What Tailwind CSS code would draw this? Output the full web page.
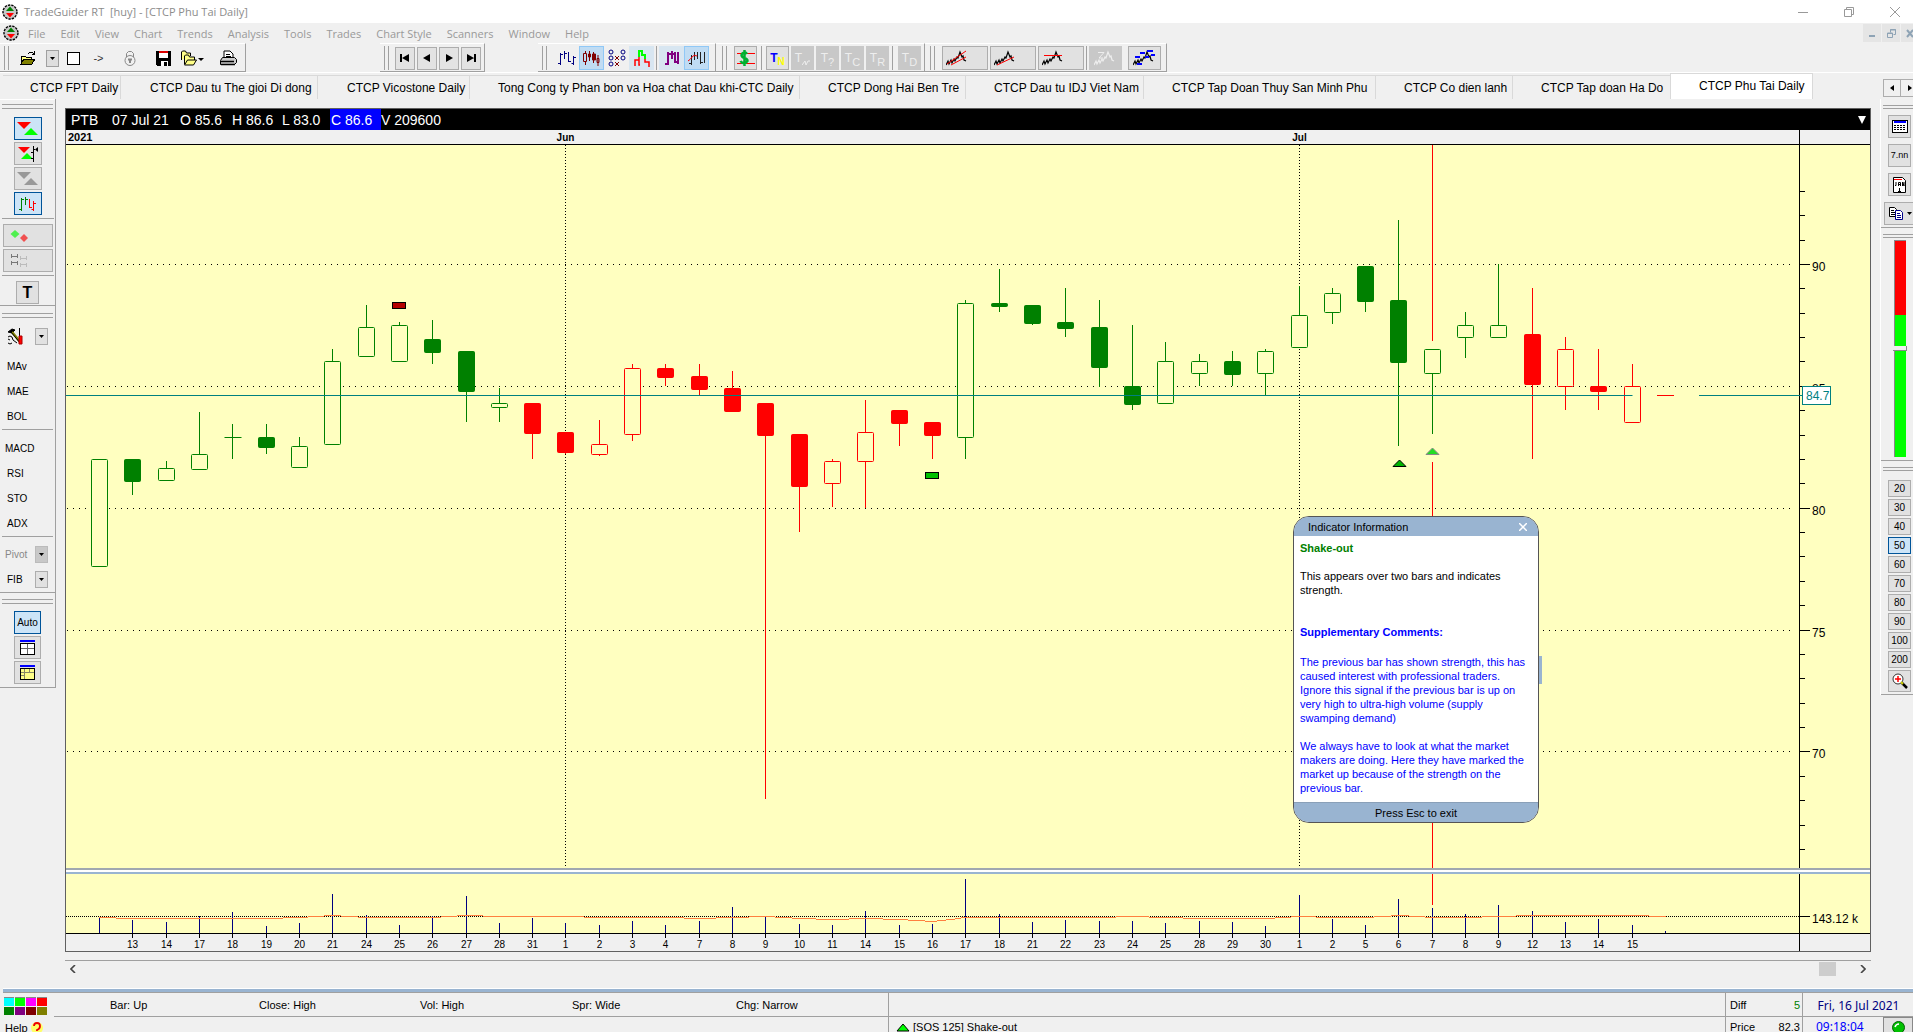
<!DOCTYPE html>
<html lang="en">
<head>
    <meta charset="UTF-8">
    <meta name="viewport" content="width=device-width, initial-scale=1.0">
    <title>TradeGuider RT [huy] - [CTCP Phu Tai Daily]</title>
    <script src="https://cdn.jsdelivr.net/npm/@tailwindcss/browser@4"></script>
</head>
<body class="h-screen flex flex-col overflow-hidden bg-[#f0f0f0] text-black text-[12px] leading-none font-['Liberation_Sans',Arial,sans-serif]">

    <!-- Shared icons -->
    <svg class="hidden">
        <symbol id="logo" viewBox="0 0 16 16">
            <circle cx="8" cy="8" r="7" fill="#c8c8c8" stroke="#000" stroke-width="1.4" stroke-dasharray="2.4 1"/>
            <path d="M8 2.5L12 7H4z" fill="#008000"/><path d="M8 13.5L4 9h8z" fill="#f00"/>
        </symbol>
        <symbol id="down" viewBox="0 0 5 3"><path d="M0 0h5L2.5 3z"/></symbol>
        <symbol id="zig" viewBox="0 0 24 16">
            <path d="M0 15l2-4 1 3 2-4 1 3 2-4 1 2 2-4 1 1 2-6 2 5 1-1 1 4 2 1" fill="none" stroke="currentColor" stroke-width="1.200"/>
        </symbol>
        <symbol id="bars" viewBox="0 0 18 16">
            <path d="M2.500 3v12M0 13.500h2M3 4.500h2M6.500 1v8M7 3.500h2M10.500 2v10M11 11.500h2M15.500 6v9M13.500 13.500h2M16 7.500h2" fill="none" stroke="currentColor"/>
        </symbol>
    </svg>

    <!-- Title bar -->
    <header class="h-[23px] shrink-0 bg-white flex items-center justify-between pl-[2px] pr-[13px] text-[#8c8c8c] font-['Open_Sans',sans-serif]">
        <h1 class="flex items-center gap-[6px] text-[11px] whitespace-pre"><svg class="size-4"><use href="#logo"/></svg>TradeGuider RT  [huy] - [CTCP Phu Tai Daily]</h1>
        <div class="flex items-center gap-[36px]">
            <button aria-label="Minimize"><svg class="w-[10px] h-[10px]" stroke="#999" fill="none"><path d="M0 5.500h10"/></svg></button>
            <button aria-label="Restore"><svg class="w-[10px] h-[10px]" stroke="#999" fill="none"><path d="M.5 2.500h7v7h-7zM2.500 2.500v-2h7v7h-2"/></svg></button>
            <button aria-label="Close"><svg class="w-[10px] h-[10px]" stroke="#999" fill="none"><path d="M0 0l10 10M10 0L0 10"/></svg></button>
        </div>
    </header>

    <!-- Menu -->
    <div class="h-5 shrink-0 flex items-center justify-between pl-[3px] overflow-hidden text-[#999] font-['Open_Sans',sans-serif]">
        <nav class="flex items-center gap-[15px] text-[11px]">
            <svg class="size-4 -mr-[6px]"><use href="#logo"/></svg>
            <a href="#">File</a><a href="#">Edit</a><a href="#">View</a><a href="#">Chart</a><a href="#">Trends</a><a href="#">Analysis</a><a href="#">Tools</a><a href="#">Trades</a><a href="#">Chart Style</a><a href="#">Scanners</a><a href="#">Window</a><a href="#">Help</a>
        </nav>
        <div class="flex gap-px -mr-[6px]">
            <button aria-label="Minimize chart" class="w-[18px] h-[18px] bg-[#e5e5e5] grid place-items-center"><svg class="size-[9px]"><path d="M1 6h6v2h-6z" fill="#8ea3b5"/></svg></button>
            <button aria-label="Restore chart" class="w-[18px] h-[18px] bg-[#e5e5e5] grid place-items-center"><svg class="size-[9px]" fill="none" stroke="#8ea3b5"><path d="M.5 4h5v4.500h-5zM0 4.500h6M3.500 3.500v-3h5v5h-2M3 1h6"/></svg></button>
            <button aria-label="Close chart" class="w-[18px] h-[18px] bg-[#e5e5e5] grid place-items-center"><svg class="size-[9px]" stroke="#8ea3b5" stroke-width="2"><path d="M1 1l6 7M7 1L1 8"/></svg></button>
        </div>
    </div>

    <!-- Toolbars -->
    <div class="h-[30px] shrink-0 flex items-start border-b border-white">
        <div class="w-[246px] h-[29px] mr-[134px] flex items-center pt-px border-r border-b border-[#a0a0a0] border-t border-t-white">
            <div class="w-[5px] h-6 ml-[4px] mr-[11px] border-x border-[#a0a0a0]"></div>
            <button aria-label="Open"><svg class="w-4 h-4" shape-rendering="crispEdges"><path d="M1 14V6h4l1 1h5v3" fill="#ffff80" stroke="#000"/><path d="M1 14l3-5h11l-3 5z" fill="#808000" stroke="#000"/><path d="M8 3.500q3-3 6 0M14.500 1v3h-3" fill="none" stroke="#000"/></svg></button>
            <button aria-label="Open list" class="w-[13px] h-[17px] ml-[10px] bg-[#dedede] border border-[#a0a0a0] grid place-items-center"><svg class="w-[5px] h-[3px]"><use href="#down"/></svg></button>
            <input type="checkbox" aria-label="Link" class="appearance-none size-[13px] ml-[8px] bg-white border border-black">
            <button class="w-[13px] ml-[12px] text-[11px] text-[#333]">-&gt;</button>
            <button aria-label="Lock" class="ml-[18px]"><svg class="w-[14px] h-4" fill="none" stroke="#888"><path d="M3.500 7V3.500l2-2h3l2 2V7"/><circle cx="7" cy="10.500" r="5"/><path d="M5 9.500h4M7 9v4" stroke-width="2"/></svg></button>
            <button aria-label="Save" class="ml-[19px]"><svg class="w-[15px] h-[15px]" shape-rendering="crispEdges"><path d="M0 0h15v15h-14l-1-1z"/><path d="M3 0h9v7h-9zM5 10h7v5h-7z" fill="#fff"/><path d="M3 0h9v2h-9z" fill="#d00"/><path d="M8 11h3v4h-3z" fill="#000"/></svg></button>
            <button aria-label="Folders" class="ml-[9px]"><svg class="w-6 h-[17px]"><path d="M1.500 10V2l1-1h3l1 2h4v3" fill="#ff8" stroke="#000"/><path d="M4.500 14V6l1-1h3l1 2h5v3" fill="#ff8" stroke="#000"/><path d="M4.500 15l3-5h9l-3 5z" fill="#ff8" stroke="#000"/><path d="M18 8h6l-3 3z"/></svg></button>
            <button aria-label="Print" class="ml-[16px]"><svg class="w-[17px] h-4"><path d="M4 8V1h6l3 3v4" fill="#fff" stroke="#000"/><path d="M6 4.500h4M6 6.500h5" stroke="#000"/><path d="M.5 10.500l2-3h12l2 2v3l-2 2h-14z" fill="#ccc" stroke="#000"/><path d="M1 11.500h13M1 14.500h14" stroke="#000" stroke-width="1.500"/></svg></button>
        </div>

        <div class="w-[105px] h-[29px] mr-[53px] flex items-center gap-[2px] pt-px border-r border-b border-t border-[#a0a0a0] border-t-white">
            <div class="w-[5px] h-6 ml-[4px] mr-[4px] border-x border-[#a0a0a0]"></div>
            <button aria-label="First" class="w-5 h-[23px] bg-[#e3e3e3] border border-[#adadad] grid place-items-center"><svg class="w-[10px] h-2"><path d="M0 0h2v8h-2zM2 4l7-4v8z"/></svg></button>
            <button aria-label="Previous" class="w-5 h-[23px] bg-[#e3e3e3] border border-[#adadad] grid place-items-center"><svg class="w-2 h-2"><path d="M0 4l7-4v8z"/></svg></button>
            <button aria-label="Next" class="w-5 h-[23px] bg-[#e3e3e3] border border-[#adadad] grid place-items-center"><svg class="w-2 h-2"><path d="M8 4L1 0v8z"/></svg></button>
            <button aria-label="Last" class="w-5 h-[23px] bg-[#e3e3e3] border border-[#adadad] grid place-items-center"><svg class="w-[10px] h-2"><path d="M8 0h2v8h-2zM8 4L1 0v8z"/></svg></button>
        </div>

        <div class="w-[178px] h-[29px] flex items-center pt-px border-r border-b border-t border-[#a0a0a0] border-t-white">
            <div class="w-[5px] h-6 ml-[4px] mr-[7px] border-x border-[#a0a0a0]"></div>
            <button aria-label="Bar chart" class="w-[25px] h-[24px] grid place-items-center text-[#000080]"><svg class="w-[18px] h-4"><use href="#bars"/></svg></button>
            <button aria-label="Candles" class="w-[25px] h-[24px] bg-[#c0dcf3] border border-[#90c8f6] grid place-items-center"><svg class="w-[17px] h-4" fill="none" stroke="#800000"><path d="M2.500 1v2M2.500 12v3M.5 3.500h3v8h-3z"/><path d="M6.500 1v10M10.500 2v11M15 5v11"/><path d="M5.500 4h2v3h-2zM9.500 4h3v6h-3z" fill="#800000"/><path d="M14 8.500h2v4h-2z"/></svg></button>
            <button aria-label="Point and figure" class="w-[25px] h-[24px] grid place-items-center"><svg class="w-[18px] h-[18px]" fill="none" stroke="#000080"><circle cx="3" cy="3" r="2"/><circle cx="3" cy="9" r="2"/><circle cx="3" cy="15" r="2"/><circle cx="15" cy="3" r="2"/><circle cx="15" cy="9" r="2"/><path d="M7 7l4 4M11 7l-4 4M7 13l4 4M11 13l-4 4" stroke="#800000"/></svg></button>
            <button aria-label="Kagi" class="w-[25px] h-[24px] bg-[#d8e6f1] grid place-items-center"><svg class="w-4 h-[17px]" fill="none" stroke-width="2"><path d="M5 7V1h3v4h3v4" stroke="#0f0"/><path d="M1 16v-6h4v5h1M5 10V7M11 9v3h4v5" stroke="#f00" stroke-width="1.500"/></svg></button>
            <div class="w-px h-6 mx-[2px] bg-[#a0a0a0]"></div>
            <button aria-label="Thick bars" class="w-[25px] h-[24px] bg-[#d8e6f1] grid place-items-center"><svg class="w-[14px] h-4" fill="none" stroke="#800080" stroke-width="2"><path d="M0 14h2M3 2v13M4 4h2M7 1v8M8 4h1M10 2v11M11 12h1M13 2v12"/></svg></button>
            <button aria-label="Lined bars" class="w-[25px] h-[24px] bg-[#c0dcf3] border border-[#90c8f6] grid place-items-center"><svg class="w-[18px] h-4" fill="none" stroke="#222"><path d="M3.500 5v10M1 13.500h2M6.500 2v8M9.500 2v7M12.500 2v12M16.500 2v11M13 12.500h2"/><path d="M0 11q2-1 4-4t5-1" stroke="#f00"/></svg></button>
        </div>

        <div class="w-[209px] h-[29px] flex items-center pt-px border-r border-b border-t border-[#a0a0a0] border-t-white">
            <div class="w-[5px] h-6 ml-[6px] mr-[7px] border-x border-[#a0a0a0]"></div>
            <button aria-label="Money" class="w-[23px] h-[24px] bg-[#e1e1e1] border border-[#adadad] grid place-items-center"><svg class="w-[18px] h-[18px]" fill="none"><path d="M0 4.500h18M0 14.500h18" stroke="#f00"/><path d="M10 5q-1-2-3-1.500T4.500 6q0 2 3 3t3 3q-1 2-3.500 2T3.500 12M7.500 1v16" stroke="#00b030" stroke-width="2.500"/></svg></button>
            <div class="w-px h-6 mx-[4px] bg-[#a0a0a0]"></div>
            <div class="flex gap-[2px]">
                <button class="w-[23px] h-[24px] bg-[#e1e1e1] border border-[#adadad] flex justify-center items-center font-bold text-[12px] text-[#00f]">T<span class="text-[#ff0] text-[10px] pt-2">N</span></button>
                <button class="w-[23px] h-[24px] bg-[#c8c8c8] flex justify-center items-center text-[12px] text-[#eee]">T<svg class="w-2 h-2 mt-2" stroke="#eee"><path d="M0 7l3-4 1 4 2-4h2" fill="none"/></svg></button>
                <button class="w-[23px] h-[24px] bg-[#c8c8c8] flex justify-center items-center text-[12px] text-[#eee]">T<span class="text-[11px] pt-2">?</span></button>
                <button class="w-[23px] h-[24px] bg-[#c8c8c8] flex justify-center items-center text-[12px] text-[#eee]">T<span class="text-[11px] pt-2">C</span></button>
                <button class="w-[23px] h-[24px] bg-[#c8c8c8] flex justify-center items-center text-[12px] text-[#eee]">T<span class="text-[11px] pt-2">R</span></button>
            </div>
            <div class="w-px h-6 ml-[3px] mr-[5px] bg-[#a0a0a0]"></div>
            <button class="w-[23px] h-[24px] bg-[#c8c8c8] flex justify-center items-center text-[12px] text-[#eee]">T<span class="text-[11px] pt-2">D</span></button>
        </div>

        <div class="w-[242px] h-[29px] flex items-center gap-[2px] pt-px border-r border-b border-t border-[#a0a0a0] border-t-white">
            <div class="w-[5px] h-6 shrink-0 ml-[5px] mr-[5px] border-x border-[#a0a0a0]"></div>
            <button aria-label="Trend channel" class="w-[46px] h-[24px] shrink-0 pl-[3px] bg-[#e1e1e1] border border-[#adadad]"><svg class="w-6 h-4"><use href="#zig"/><path d="M1 14L20 1M5 15L20 7" stroke="#f00"/></svg></button>
            <button aria-label="Trend line" class="w-[46px] h-[24px] shrink-0 pl-[3px] bg-[#e1e1e1] border border-[#adadad]"><svg class="w-6 h-4"><use href="#zig"/><path d="M3 15L20 7" stroke="#f00"/></svg></button>
            <button aria-label="Resistance" class="w-[46px] h-[24px] shrink-0 pl-[3px] bg-[#e1e1e1] border border-[#adadad]"><svg class="w-6 h-4"><use href="#zig"/><path d="M2 5.500h18" stroke="#f00"/></svg></button>
            <div class="w-px h-6 shrink-0 bg-[#a0a0a0]"></div>
            <button aria-label="Auto trends off" class="w-[33px] h-[24px] shrink-0 bg-[#c8c8c8] text-[#eee] grid place-items-center"><svg class="w-6 h-4"><use href="#zig"/><path d="M4 2.500h6L5 8h4" stroke="#eee" fill="none"/></svg></button>
            <button aria-label="Auto trends" class="w-[33px] h-[24px] shrink-0 ml-[4px] bg-[#e1e1e1] border border-[#adadad] grid place-items-center"><svg class="w-6 h-4"><use href="#zig"/><path d="M2 7h5M7 3h5M14 1h6M12 7h4M18 5h4M4 14h5" stroke="#00f" stroke-width="2"/></svg></button>
        </div>
    </div>

    <!-- Chart tabs -->
    <div class="h-[26px] shrink-0 flex items-end pl-[3px] whitespace-nowrap">
        <button class="w-[118px] h-6 shrink-0 pt-px pl-[27px] text-left border-t border-r border-[#d9d9d9]">CTCP FPT Daily</button>
        <button class="w-[197px] h-6 shrink-0 pt-px pl-[29px] text-left border-t border-r border-[#d9d9d9]">CTCP Dau tu The gioi Di dong</button>
        <button class="w-[152px] h-6 shrink-0 pt-px pl-[29px] text-left border-t border-r border-[#d9d9d9]">CTCP Vicostone Daily</button>
        <button class="w-[330px] h-6 shrink-0 pt-px pl-[28px] text-left border-t border-r border-[#d9d9d9]">Tong Cong ty Phan bon va Hoa chat Dau khi-CTC Daily</button>
        <button class="w-[166px] h-6 shrink-0 pt-px pl-[28px] text-left border-t border-r border-[#d9d9d9]">CTCP Dong Hai Ben Tre</button>
        <button class="w-[178px] h-6 shrink-0 pt-px pl-[28px] text-left border-t border-r border-[#d9d9d9]">CTCP Dau tu IDJ Viet Nam</button>
        <button class="w-[232px] h-6 shrink-0 pt-px pl-[28px] text-left border-t border-r border-[#d9d9d9]">CTCP Tap Doan Thuy San Minh Phu</button>
        <button class="w-[137px] h-6 shrink-0 pt-px pl-[28px] text-left border-t border-r border-[#d9d9d9]">CTCP Co dien lanh</button>
        <button class="w-[157px] h-6 shrink-0 pt-px pl-[28px] text-left border-t border-[#d9d9d9]">CTCP Tap doan Ha Do</button>
        <button class="w-[143px] h-[26px] shrink-0 pb-px pl-[28px] text-left bg-white border border-b-0 border-[#d9d9d9]">CTCP Phu Tai Daily</button>
        <div class="ml-auto mb-[2px] flex -mr-[6px]">
            <button aria-label="Scroll tabs left" class="w-[18px] h-[18px] bg-[#f0f0f0] border border-[#adadad] grid place-items-center"><svg class="w-[4px] h-[6px]"><path d="M0 3l4-3v6z"/></svg></button>
            <button aria-label="Scroll tabs right" class="w-[18px] h-[18px] bg-[#f0f0f0] border border-[#adadad] border-l-0 grid place-items-center"><svg class="w-[4px] h-[6px]"><path d="M4 3L0 0v6z"/></svg></button>
        </div>
    </div>

    <div class="flex-1 min-h-0 flex">
        <!-- Left tools -->
        <aside class="w-14 shrink-0 self-start flex flex-col border-r border-[#a0a0a0] text-[10px]">
            <div class="h-[207px] border-b border-[#a0a0a0] border-t border-t-white flex flex-col items-center">
                <div class="w-[51px] h-[5px] mt-[4px] mb-[8px] border-y border-[#a0a0a0]"></div>
                <div class="flex flex-col gap-[2px]">
                    <button aria-label="Signals" class="w-7 h-[23px] bg-[#cce4f7] border border-[#005499] grid place-items-center"><svg class="w-[21px] h-[13px]"><path d="M0 0h14L7 7z" fill="#f00"/><path d="M7 13h14l-7-7z" fill="#0f0"/></svg></button>
                    <button aria-label="Signals on bars" class="w-7 h-[23px] bg-[#e1e1e1] border border-[#adadad] grid place-items-center"><svg class="w-5 h-4"><path d="M0 1h12L6 7z" fill="#f00"/><path d="M3 13h12l-6-6z" fill="#0f0"/><path d="M15.500 0v16M13 6.500h2M13 12.500h2M16 3.500h1" stroke="#000"/><path d="M20 1v5l-3-2.500z"/></svg></button>
                    <button aria-label="Signals off" class="w-7 h-[23px] bg-[#e1e1e1] border border-[#adadad] grid place-items-center"><svg class="w-[21px] h-[13px]" fill="#999"><path d="M0 0h14L7 7z"/><path d="M7 13h14l-7-7z"/></svg></button>
                    <button aria-label="Coloured bars" class="w-7 h-[23px] bg-[#cce4f7] border border-[#005499] grid place-items-center"><svg class="w-[17px] h-4" fill="none"><path d="M2.500 2v13M0 13.500h2M3 3.500h2M6.500 1v8M7 3.500h2" stroke="#008000"/><path d="M10.500 3v9M11 11.500h2M14.500 5v10M12.500 13.500h2M15 7.500h2" stroke="#f00"/></svg></button>
                </div>
                <div class="w-[52px] h-px bg-[#a0a0a0] mt-[3px] mb-[5px]"></div>
                <button aria-label="Diamonds" class="w-[50px] h-[23px] shrink-0 pl-[6px] mb-[2px] bg-[#e1e1e1] border border-[#adadad]"><svg class="w-[18px] h-3"><path d="M5 0l4.500 4L5 8 .5 4z" fill="#50f050"/><path d="M14 4l4 4-4 4-4-4z" fill="#f05050"/></svg></button>
                <button aria-label="Pairs" class="w-[50px] h-[23px] shrink-0 pl-[7px] bg-[#e1e1e1] border border-[#adadad]"><svg class="w-[17px] h-[13px]" fill="none"><path d="M.5 0v4M.5 7v4M6.500 0v4M6.500 7v4M1 2.500h5M1 8.500h5" stroke="#777"/><path d="M9.500 2v4M9.500 9v4M15.500 2v4M15.500 9v4M10 4.500h5M10 10.500h5" stroke="#bbb"/></svg></button>
                <div class="w-[52px] h-px shrink-0 bg-[#a0a0a0] mt-[3px] mb-[5px]"></div>
                <button class="w-[23px] h-[23px] shrink-0 bg-[#e1e1e1] border border-[#adadad] text-[16px] font-bold">T</button>
            </div>
            <div class="h-[287px] border-b border-[#a0a0a0] flex flex-col px-[2px]">
                <div class="h-[5px] mt-[7px] mb-[6px] border-y border-[#a0a0a0]"></div>
                <div class="h-[25px] flex items-center justify-between pl-[5px] pr-[5px]">
                    <button aria-label="Tools"><svg class="w-[17px] h-[17px]" fill="none" stroke="#000"><path d="M1 4l4-3 3 1-3 3z" fill="#000"/><path d="M5 4l9 11" stroke="#808000" stroke-width="2.500"/><path d="M4 4l10 12M12.500 0v9M1 9q2-2 4 0l1 3 4 3M1 11l2 1M1 15q2 2 4 0"/><path d="M12 8h3v8h-3z" fill="#f00" stroke="#a00"/></svg></button>
                    <button aria-label="Tool list" class="w-[13px] h-[17px] bg-[#e1e1e1] border border-[#adadad] grid place-items-center"><svg class="w-[5px] h-[3px]"><use href="#down"/></svg></button>
                </div>
                <button class="h-[25px] pl-[5px] mt-[5px] text-left">MAv</button>
                <button class="h-[25px] pl-[5px] text-left">MAE</button>
                <button class="h-[25px] pl-[5px] text-left">BOL</button>
                <div class="h-px shrink-0 bg-[#a0a0a0] mb-[6px]"></div>
                <button class="h-[25px] pl-[3px] text-left">MACD</button>
                <button class="h-[25px] pl-[5px] text-left">RSI</button>
                <button class="h-[25px] pl-[5px] text-left">STO</button>
                <button class="h-[25px] pl-[5px] text-left">ADX</button>
                <div class="h-px shrink-0 bg-[#a0a0a0] mb-[5px]"></div>
                <div class="h-[25px] flex items-center justify-between pl-[3px] pr-[5px] text-[#888]">
                    <span>Pivot</span>
                    <button aria-label="Pivot list" class="w-[13px] h-[17px] bg-[#c8c8c8] border border-[#bbb] grid place-items-center"><svg class="w-[5px] h-[3px]"><use href="#down"/></svg></button>
                </div>
                <div class="h-[25px] flex items-center justify-between pl-[5px] pr-[5px]">
                    <span>FIB</span>
                    <button aria-label="Fibonacci list" class="w-[13px] h-[17px] bg-[#e1e1e1] border border-[#adadad] grid place-items-center"><svg class="w-[5px] h-[3px]"><use href="#down"/></svg></button>
                </div>
            </div>
            <div class="h-[95px] border-b border-[#a0a0a0] flex flex-col items-center gap-[2px]">
                <div class="w-[51px] h-[5px] mt-[6px] mb-[5px] border-y border-[#a0a0a0]"></div>
                <button class="w-[27px] h-[23px] bg-[#cce4f7] border border-[#005499]">Auto</button>
                <button aria-label="Grid window" class="w-[27px] h-[23px] bg-[#e1e1e1] border border-[#adadad] grid place-items-center"><svg class="w-[15px] h-[15px]" shape-rendering="crispEdges"><path d="M.5 3.500h14v11h-14z" fill="#fff" stroke="#000"/><path d="M0 0h15v2h-15z" fill="#00f"/><path d="M7.500 4v10M1 8.500h13" stroke="#666"/></svg></button>
                <button aria-label="Data window" class="w-[27px] h-[23px] bg-[#e1e1e1] border border-[#adadad] grid place-items-center"><svg class="w-[15px] h-[15px]" shape-rendering="crispEdges"><path d="M.5 3.500h14v11h-14z" fill="#ff8" stroke="#000"/><path d="M0 0h15v2h-15z" fill="#00f"/><path d="M4.500 4v10M9.500 4v3M1 7.500h13M1 10.500h3" stroke="#886"/></svg></button>
            </div>
        </aside>

        <!-- Chart -->
        <main class="flex-1 min-w-0 mx-[9px] mt-[9px] flex flex-col">
            <section class="relative flex-1 min-h-0 flex flex-col border border-[#606060] overflow-hidden">
                <div class="h-[21px] shrink-0 bg-black text-white text-[14px] flex items-center pl-[5px] pr-[4px] whitespace-nowrap">
                    <span class="w-[41px]">PTB</span>
                    <span class="w-[68px]">07 Jul 21</span>
                    <span class="w-[52px]">O 85.6</span>
                    <span class="w-[50px]">H 86.6</span>
                    <span class="w-[48px]">L 83.0</span>
                    <span class="w-[51px] h-[21px] leading-[22px] pl-px bg-[#00f]">C 86.6</span>
                    <span>V 209600</span>
                    <button aria-label="Chart menu" class="ml-auto"><svg class="w-[8px] h-[8px]"><path d="M0 0h8L4 8z" fill="#fff"/></svg></button>
                </div>
                <div class="h-[15px] shrink-0 flex border-b border-black">
                    <svg class="flex-1" id="months"></svg>
                    <div class="w-[71px] border-l border-black"></div>
                </div>
                <div class="flex-1 min-h-0 flex bg-[#ffffc0]">
                    <svg class="flex-1 min-w-0 h-full" id="prices"></svg>
                    <svg class="w-[71px] h-full shrink-0" id="priceAxis"></svg>
                </div>
                <div class="h-[6px] shrink-0 bg-white border-y-2 border-t-[#a0a8b0] border-b-[#99b4d1]"></div>
                <div class="h-[59px] shrink-0 flex bg-[#ffffc0]">
                    <svg class="flex-1 min-w-0 h-full" id="volumes"></svg>
                    <svg class="w-[71px] h-full shrink-0" id="volumeAxis"></svg>
                </div>
                <div class="h-[18px] shrink-0 flex border-t border-black">
                    <svg class="flex-1 min-w-0 h-full" id="days"></svg>
                    <div class="w-[71px] border-l border-black"></div>
                </div>

                <!-- Indicator popup -->
                <div class="absolute left-[1227px] top-[407px] w-[246px]">
                    <div class="absolute -right-[3px] top-[140px] w-[4px] h-[28px] bg-[#99b4d1] border-l border-[#555]"></div>
                    <div class="relative bg-white border border-[#555] rounded-[16px] overflow-hidden text-[11px]">
                        <div class="h-[19px] pt-px bg-[#99b4d1] flex items-center justify-between pl-[14px] pr-[11px]">
                            <span>Indicator Information</span>
                            <button aria-label="Close"><svg class="w-2 h-2" stroke="#fff" stroke-width="1.500"><path d="M0 0l8 8M8 0L0 8"/></svg></button>
                        </div>
                        <div class="h-[266px] pl-[6px] pt-[5px] leading-[14px] whitespace-nowrap">
                            <h2 class="font-bold text-[#008000]">Shake-out</h2>
                            <p class="mt-[14px]">This appears over two bars and indicates<br>strength.</p>
                            <h2 class="mt-[28px] font-bold text-[#00f]">Supplementary Comments:</h2>
                            <p class="mt-[16px] text-[#00f]">The previous bar has shown strength, this has<br>caused interest with professional traders.<br>Ignore this signal if the previous bar is up on<br>very high to ultra-high volume (supply<br>swamping demand)</p>
                            <p class="mt-[14px] text-[#00f]">We always have to look at what the market<br>makers are doing. Here they have marked the<br>market up because of the strength on the<br>previous bar.</p>
                        </div>
                        <div class="h-5 pt-px bg-[#99b4d1] border-t border-[#8aa0b8] grid place-items-center">Press Esc to exit</div>
                    </div>
                </div>
            </section>

            <!-- Scroll bar -->
            <div class="h-[16px] mt-[8px] mb-[12px] shrink-0 flex items-center border-t border-[#a0a0a0] pl-[5px] pr-[5px]">
                <button aria-label="Scroll left"><svg class="w-[6px] h-[8px]" fill="none" stroke="#444" stroke-width="1.600"><path d="M5 0L1 4l4 4"/></svg></button>
                <div class="ml-auto mr-[24px] w-[17px] h-[14px] bg-[#cdcdcd]"></div>
                <button aria-label="Scroll right"><svg class="w-[6px] h-[8px]" fill="none" stroke="#444" stroke-width="1.600"><path d="M1 0l4 4-4 4"/></svg></button>
            </div>
        </main>

        <!-- Right tools -->
        <aside class="w-[33px] shrink-0 self-start flex flex-col border-l border-white text-[10px] overflow-hidden">
            <div class="h-[129px] border-b border-[#a0a0a0] flex flex-col gap-[6px] pl-[7px]">
                <div class="w-9 h-[4px] shrink-0 mt-[6px] -ml-[5px] border-y border-[#a0a0a0]"></div>
                <button aria-label="Table" class="w-[23px] h-[23px] shrink-0 bg-[#e1e1e1] border border-[#adadad] grid place-items-center"><svg class="w-4 h-[13px]" shape-rendering="crispEdges"><path d="M.5.500h15v12h-15z" fill="#fff" stroke="#000"/><path d="M2 1h12v2h-12z" fill="#00f"/><path d="M2 5.500h12M2 7.500h12M2 9.500h12" stroke="#000" stroke-dasharray="2 1"/></svg></button>
                <button class="w-[23px] h-[23px] shrink-0 bg-[#e1e1e1] border border-[#adadad] text-[9px]">7.nn</button>
                <button aria-label="Calendar" class="w-[23px] h-[23px] shrink-0 bg-[#e1e1e1] border border-[#adadad] grid place-items-center"><svg class="w-[13px] h-4"><path d="M.5.500h9l3 3v12h-12z" fill="#fff" stroke="#000"/><path d="M1 2.500h8" stroke="#f00"/><path d="M2 8.500h1V5M5.500 9V5.500h2V9M5 7.500h2M9.500 9V5l1.500 4V5M5 14.500h3M6.500 11v3" stroke="#000" fill="none"/></svg></button>
                <button aria-label="Copy" class="w-[36px] h-[23px] shrink-0 -ml-[4px] pl-[4px] bg-[#e1e1e1] border border-[#adadad] flex items-center"><svg class="w-6 h-[13px] shrink-0"><path d="M.5.500h5l2 2v7h-7z" fill="#fff" stroke="#000"/><path d="M2 3.500h3M2 5.500h4M2 7.500h4" stroke="#000"/><path d="M6.500 3.500h5l2 2v7h-7z" fill="#fff" stroke="#008"/><path d="M8 6.500h3M8 8.500h4M8 10.500h4" stroke="#008"/><path d="M18 5h5l-2.500 3z"/></svg></button>
            </div>
            <div class="h-[233px] border-b border-[#a0a0a0] flex flex-col pl-[13px]">
                <div class="w-9 h-[4px] shrink-0 mt-[6px] mb-[2px] -ml-[11px] border-y border-[#a0a0a0]"></div>
                <div class="relative w-[12px] border-l border-t border-[#888]">
                    <div class="h-[74px] bg-[#f00]"></div>
                    <div class="h-[142px] bg-[#0f0]"></div>
                    <div class="absolute -left-[2px] top-[105px] w-[14px] h-[5px] bg-[#f0f0f0] border-r border-b border-[#888]"></div>
                </div>
            </div>
            <div class="h-[234px] border-b border-[#a0a0a0] flex flex-col gap-[2px] pl-[7px]">
                <div class="w-9 h-[4px] shrink-0 mt-[6px] mb-[7px] -ml-[5px] border-y border-[#a0a0a0]"></div>
                <button class="w-[23px] h-[17px] shrink-0 bg-[#e1e1e1] border border-[#adadad]">20</button>
                <button class="w-[23px] h-[17px] shrink-0 bg-[#e1e1e1] border border-[#adadad]">30</button>
                <button class="w-[23px] h-[17px] shrink-0 bg-[#e1e1e1] border border-[#adadad]">40</button>
                <button class="w-[23px] h-[17px] shrink-0 bg-[#cce4f7] border border-[#005499]">50</button>
                <button class="w-[23px] h-[17px] shrink-0 bg-[#e1e1e1] border border-[#adadad]">60</button>
                <button class="w-[23px] h-[17px] shrink-0 bg-[#e1e1e1] border border-[#adadad]">70</button>
                <button class="w-[23px] h-[17px] shrink-0 bg-[#e1e1e1] border border-[#adadad]">80</button>
                <button class="w-[23px] h-[17px] shrink-0 bg-[#e1e1e1] border border-[#adadad]">90</button>
                <button class="w-[23px] h-[17px] shrink-0 bg-[#e1e1e1] border border-[#adadad]">100</button>
                <button class="w-[23px] h-[17px] shrink-0 bg-[#e1e1e1] border border-[#adadad]">200</button>
                <button aria-label="Zoom" class="w-[23px] h-[22px] shrink-0 bg-[#e1e1e1] border border-[#adadad] grid place-items-center"><svg class="w-4 h-4"><circle cx="6" cy="6" r="5" fill="#fff" stroke="#333"/><path d="M3 6h6M6 3v6" stroke="#f00" stroke-width="1.500"/><path d="M10 10l5 5" stroke="#000" stroke-width="2.500"/><path d="M9 9l2 2" stroke="#cc0" stroke-width="2"/></svg></button>
            </div>
        </aside>
    </div>

    <!-- Status bar -->
    <footer class="h-[44px] shrink-0 flex flex-col text-[11px] whitespace-nowrap">
        <div class="h-[5px] shrink-0 ml-[3px] bg-[#99b4d1] border-t border-white border-b border-b-[#a0a0a0]"></div>
        <div class="flex">
            <div class="w-[54px] shrink-0 pl-[4px] pt-[4px]">
                <div class="grid grid-cols-4 gap-px w-[43px] h-[18px]">
                    <i class="bg-[#0ff] border-t border-[#888]"></i><i class="bg-[#0f0] border-t border-[#888]"></i><i class="bg-[#f0f] border-t border-[#888]"></i><i class="bg-[#f00] border-t border-[#888]"></i>
                    <i class="bg-[#008000]"></i><i class="bg-[#800080]"></i><i class="bg-[#800000]"></i><i class="bg-[#808000]"></i>
                </div>
                <a href="#" class="flex items-center gap-[2px] pt-[5px] pl-px">Help <svg class="w-[14px] h-4"><circle cx="7" cy="8" r="6" fill="#ff6"/><path d="M4 6q0-3 3-3t3 3-3 4v1M7 12v2" fill="none" stroke="#e00" stroke-width="1.800"/></svg></a>
            </div>
            <div class="flex-1 min-w-0">
                <div class="h-6 flex items-center border-b border-[#a0a0a0]">
                    <div class="w-[835px] h-full shrink-0 flex items-center pt-[2px] pl-[56px] border-r border-[#a0a0a0]">
                        <span class="w-[149px]">Bar: Up</span>
                        <span class="w-[161px]">Close: High</span>
                        <span class="w-[152px]">Vol: High</span>
                        <span class="w-[164px]">Spr: Wide</span>
                        <span>Chg: Narrow</span>
                    </div>
                </div>
                <div class="h-5 flex items-center">
                    <div class="w-[835px] h-full shrink-0 border-r border-[#a0a0a0]"></div>
                    <svg class="w-[14px] h-[9px] ml-[7px] mr-[3px]"><path d="M7 1l6 7H1z" fill="#0f0" stroke="#000"/></svg>
                    <span>[SOS 125] Shake-out</span>
                </div>
            </div>
            <div class="w-[78px] shrink-0 border-x border-[#a0a0a0]">
                <div class="h-6 flex items-center justify-between pt-[2px] pl-[4px] pr-[2px] border-b border-[#a0a0a0]"><span>Diff</span><span class="text-[#008000]">5</span></div>
                <div class="h-5 flex items-center justify-between pl-[4px] pr-[2px]"><span>Price</span><span>82.3</span></div>
            </div>
            <div class="w-[110px] shrink-0 text-[12px] font-['Noto_Sans',sans-serif]">
                <div class="h-6 flex items-center justify-center pt-[2px] pl-px border-b border-[#a0a0a0] text-[#000080]">Fri, 16 Jul 2021</div>
                <div class="h-5 flex items-center pl-[13px] text-[#00f]">
                    <span class="flex-1">09:18:04</span>
                    <button aria-label="Connection" class="w-[30px] h-5 bg-[#e1e1e1] border border-[#888] grid place-items-center"><svg class="size-[13px]"><circle cx="6.500" cy="6.500" r="6" fill="#00c000" stroke="#006000"/><path d="M3 6q1-3 4-3" stroke="#fff" stroke-width="1.500" fill="none"/></svg></button>
                </div>
            </div>
        </div>
    </footer>

    <script>
        var GREEN = '#008000', RED = '#ff0000';
        var STEP = 33.32, FIRST = 33.5;
        var PX_PER_UNIT = 24.37;

        // day, colour, filled, high, body top, body bottom, low, volume top
        var bars = [
            ['', 'g', 0, 314, 314, 421, 421, 43], ['13', 'g', 1, 314, 314, 336, 350, 46], ['14', 'g', 0, 316, 323, 335, 335, 48],
            ['17', 'g', 0, 267, 309, 324, 324, 42], ['18', 'g', 1, 279, 292, 292, 314, 38], ['19', 'g', 1, 279, 292, 302, 309, 52],
            ['20', 'g', 0, 292, 301, 322, 322, 49], ['21', 'g', 0, 204, 216, 299, 299, 20], ['24', 'g', 0, 160, 182, 211, 211, 41],
            ['25', 'g', 0, 177, 180, 216, 216, 51], ['26', 'g', 1, 175, 194, 207, 219, 42], ['27', 'g', 1, 206, 206, 246, 277, 22],
            ['28', 'g', 0, 243, 258, 262, 277, 49], ['31', 'r', 1, 258, 258, 288, 314, 44], ['1', 'r', 1, 287, 287, 307, 309, 49],
            ['2', 'r', 0, 275, 299, 309, 311, 51], ['3', 'r', 0, 219, 223, 289, 296, 47], ['4', 'r', 1, 219, 223, 232, 241, 51],
            ['7', 'r', 1, 219, 231, 244, 250, 47], ['8', 'r', 1, 226, 243, 266, 266, 33], ['9', 'r', 1, 258, 258, 290, 654, 43],
            ['10', 'r', 1, 289, 289, 341, 387, 50], ['11', 'r', 0, 314, 316, 338, 362, 51], ['14', 'r', 0, 255, 287, 316, 363, 37],
            ['15', 'r', 1, 265, 265, 278, 301, 51], ['16', 'r', 1, 277, 277, 290, 314, 50], ['17', 'g', 0, 155, 158, 292, 314, 5],
            ['18', 'g', 1, 124, 158, 161, 167, 40], ['21', 'g', 1, 160, 160, 178, 180, 48], ['22', 'g', 1, 143, 177, 183, 192, 46],
            ['23', 'g', 1, 155, 182, 222, 242, 47], ['24', 'g', 1, 180, 241, 259, 265, 47], ['25', 'g', 0, 197, 216, 258, 258, 49],
            ['28', 'g', 0, 209, 216, 228, 241, 47], ['29', 'g', 1, 206, 216, 229, 241, 48], ['30', 'g', 0, 204, 206, 228, 250, 52],
            ['1', 'g', 0, 141, 170, 202, 202, 21], ['2', 'g', 0, 143, 148, 167, 179, 45], ['5', 'g', 1, 121, 121, 156, 167, 51],
            ['6', 'g', 1, 75, 155, 217, 301, 25], ['7', 'g', 0, 204, 204, 228, 289, 34], ['8', 'g', 0, 167, 180, 192, 213, 40],
            ['9', 'g', 0, 119, 180, 192, 192, 31], ['12', 'r', 1, 143, 189, 239, 314, 37], ['13', 'r', 0, 192, 204, 241, 265, 48],
            ['14', 'r', 1, 204, 241, 246, 265, 45], ['15', 'r', 0, 219, 241, 277, 277, 51]
        ];

        function barX(i) { return Math.floor(FIRST + i * STEP) + 0.5; }
        function line(x1, y1, x2, y2, color, extra) {
            return '<path d="M' + x1 + ' ' + y1 + 'L' + x2 + ' ' + y2 + '" fill="none" stroke="' + color + '" ' + (extra || '') + '/>';
        }
        function text(x, y, str, extra) {
            return '<text x="' + x + '" y="' + y + '" ' + (extra || '') + '>' + str + '</text>';
        }
        function put(id, html) { document.getElementById(id).innerHTML = html; }

        var june = barX(14), july = barX(36), cursor = barX(40);
        var VDOT = 'stroke-dasharray="1 2"';

        // month strip
        put('months', text(2, 11, '2021', 'font-size="11" font-weight="bold"') +
            text(june, 11, 'Jun', 'font-size="10" font-weight="bold" text-anchor="middle"') +
            text(july, 11, 'Jul', 'font-size="10" font-weight="bold" text-anchor="middle"'));

        // price pane
        var p = '', a = line(0.5, 0, 0.5, 2000, '#000');
        for (var price = 93; price >= 66; price--) {
            var y = Math.round(119 + (90 - price) * PX_PER_UNIT) + 0.5;
            if (price % 5 === 0) {
                p += line(1, y, 1725, y, '#000', 'stroke-dasharray="1 5"');
                a += line(0, y, 11, y, '#000') + text(13, y + 6, price, 'font-size="12"');
            } else {
                a += line(0, y, 6, y, '#000');
            }
        }
        p += line(june, 0, june, 2000, '#000', VDOT) + line(july, 0, july, 2000, '#000', VDOT);
        p += line(cursor, 0, cursor, 196, RED) + line(cursor, 317, cursor, 2000, RED);
        bars.forEach(function (b, i) {
            var x = barX(i), c = b[1] === 'g' ? GREEN : RED;
            if (b[4] === b[5]) {
                p += line(x, b[3], x, b[6], c) + line(x - 8, b[4] + 0.5, x + 9, b[4] + 0.5, c);
                return;
            }
            p += line(x, b[3], x, b[6], c);
            p += '<rect x="' + (x - 8) + '" y="' + (b[4] + 0.5) + '" width="16" height="' + (b[5] - b[4]) + '" rx="1" stroke="' + c + '" fill="' + (b[2] ? c : '#ffffc0') + '"/>';
        });
        p += line(0, 250.5, barX(46), 250.5, '#008080') + line(1633, 250.5, 1740, 250.5, '#008080');
        p += line(1591, 250.5, 1608, 250.5, RED);
        p += '<rect x="326.5" y="157.5" width="13" height="6" fill="#b40000" stroke="#000"/>';
        p += '<rect x="859.5" y="327.5" width="13" height="6" fill="#00c000" stroke="#000"/>';
        p += '<path d="M1333.500 315L1340 321.500H1327z" fill="#00b400" stroke="#000"/>';
        p += '<path d="M1366.500 303L1373 309.500H1360z" fill="#22dd22" stroke="#888"/>';
        put('prices', p);
        a += line(0, 250.5, 4, 250.5, '#008080') + '<rect x="3.5" y="241.5" width="28" height="18" fill="#fff" stroke="#008080"/>' +
            text(7, 255, '84.7', 'font-size="12" fill="#008080"');
        put('priceAxis', a);

        // volume pane
        var v = line(0, 42.5, 1740, 42.5, '#000', 'stroke-dasharray="1 1"');
        var d = '';
        v += line(cursor, 0, cursor, 31, RED);
        bars.forEach(function (b, i) {
            var x = barX(i);
            v += line(x, b[7], x, 59, '#000080');
            if (i > 0) {
                d += line(x, 0, x, 4, '#000') + text(x, 14, b[0], 'font-size="10" text-anchor="middle"');
            }
        });
        // moving average as [x, y] steps
        var avg = [[33, 43], [50, 44], [217, 43], [242, 42], [258, 41], [275, 42], [292, 43], [375, 42], [391, 41], [417, 42], [518, 43],
            [618, 44], [650, 43], [683, 42], [709, 43], [726, 44], [750, 45], [783, 44], [817, 45], [842, 46], [859, 47], [871, 46],
            [880, 45], [889, 44], [895, 43], [1050, 42], [1083, 43], [1117, 44], [1209, 43], [1225, 42], [1250, 43], [1308, 42],
            [1325, 41], [1343, 42], [1359, 43], [1416, 42], [1450, 41], [1583, 42], [1600, 42]];
        for (var i = 0; i < avg.length - 1; i++) {
            v += line(avg[i][0], avg[i][1] + 0.5, avg[i + 1][0], avg[i][1] + 0.5, '#ff8040');
        }
        v += line(1599.5, 57, 1599.5, 59, '#000080');
        put('volumes', v);
        put('volumeAxis', line(0.5, 0, 0.5, 59, '#000') + line(0, 42.5, 11, 42.5, '#000') + text(13, 49, '143.12 k', 'font-size="12"'));
        put('days', d);
    </script>
</body>
</html>
